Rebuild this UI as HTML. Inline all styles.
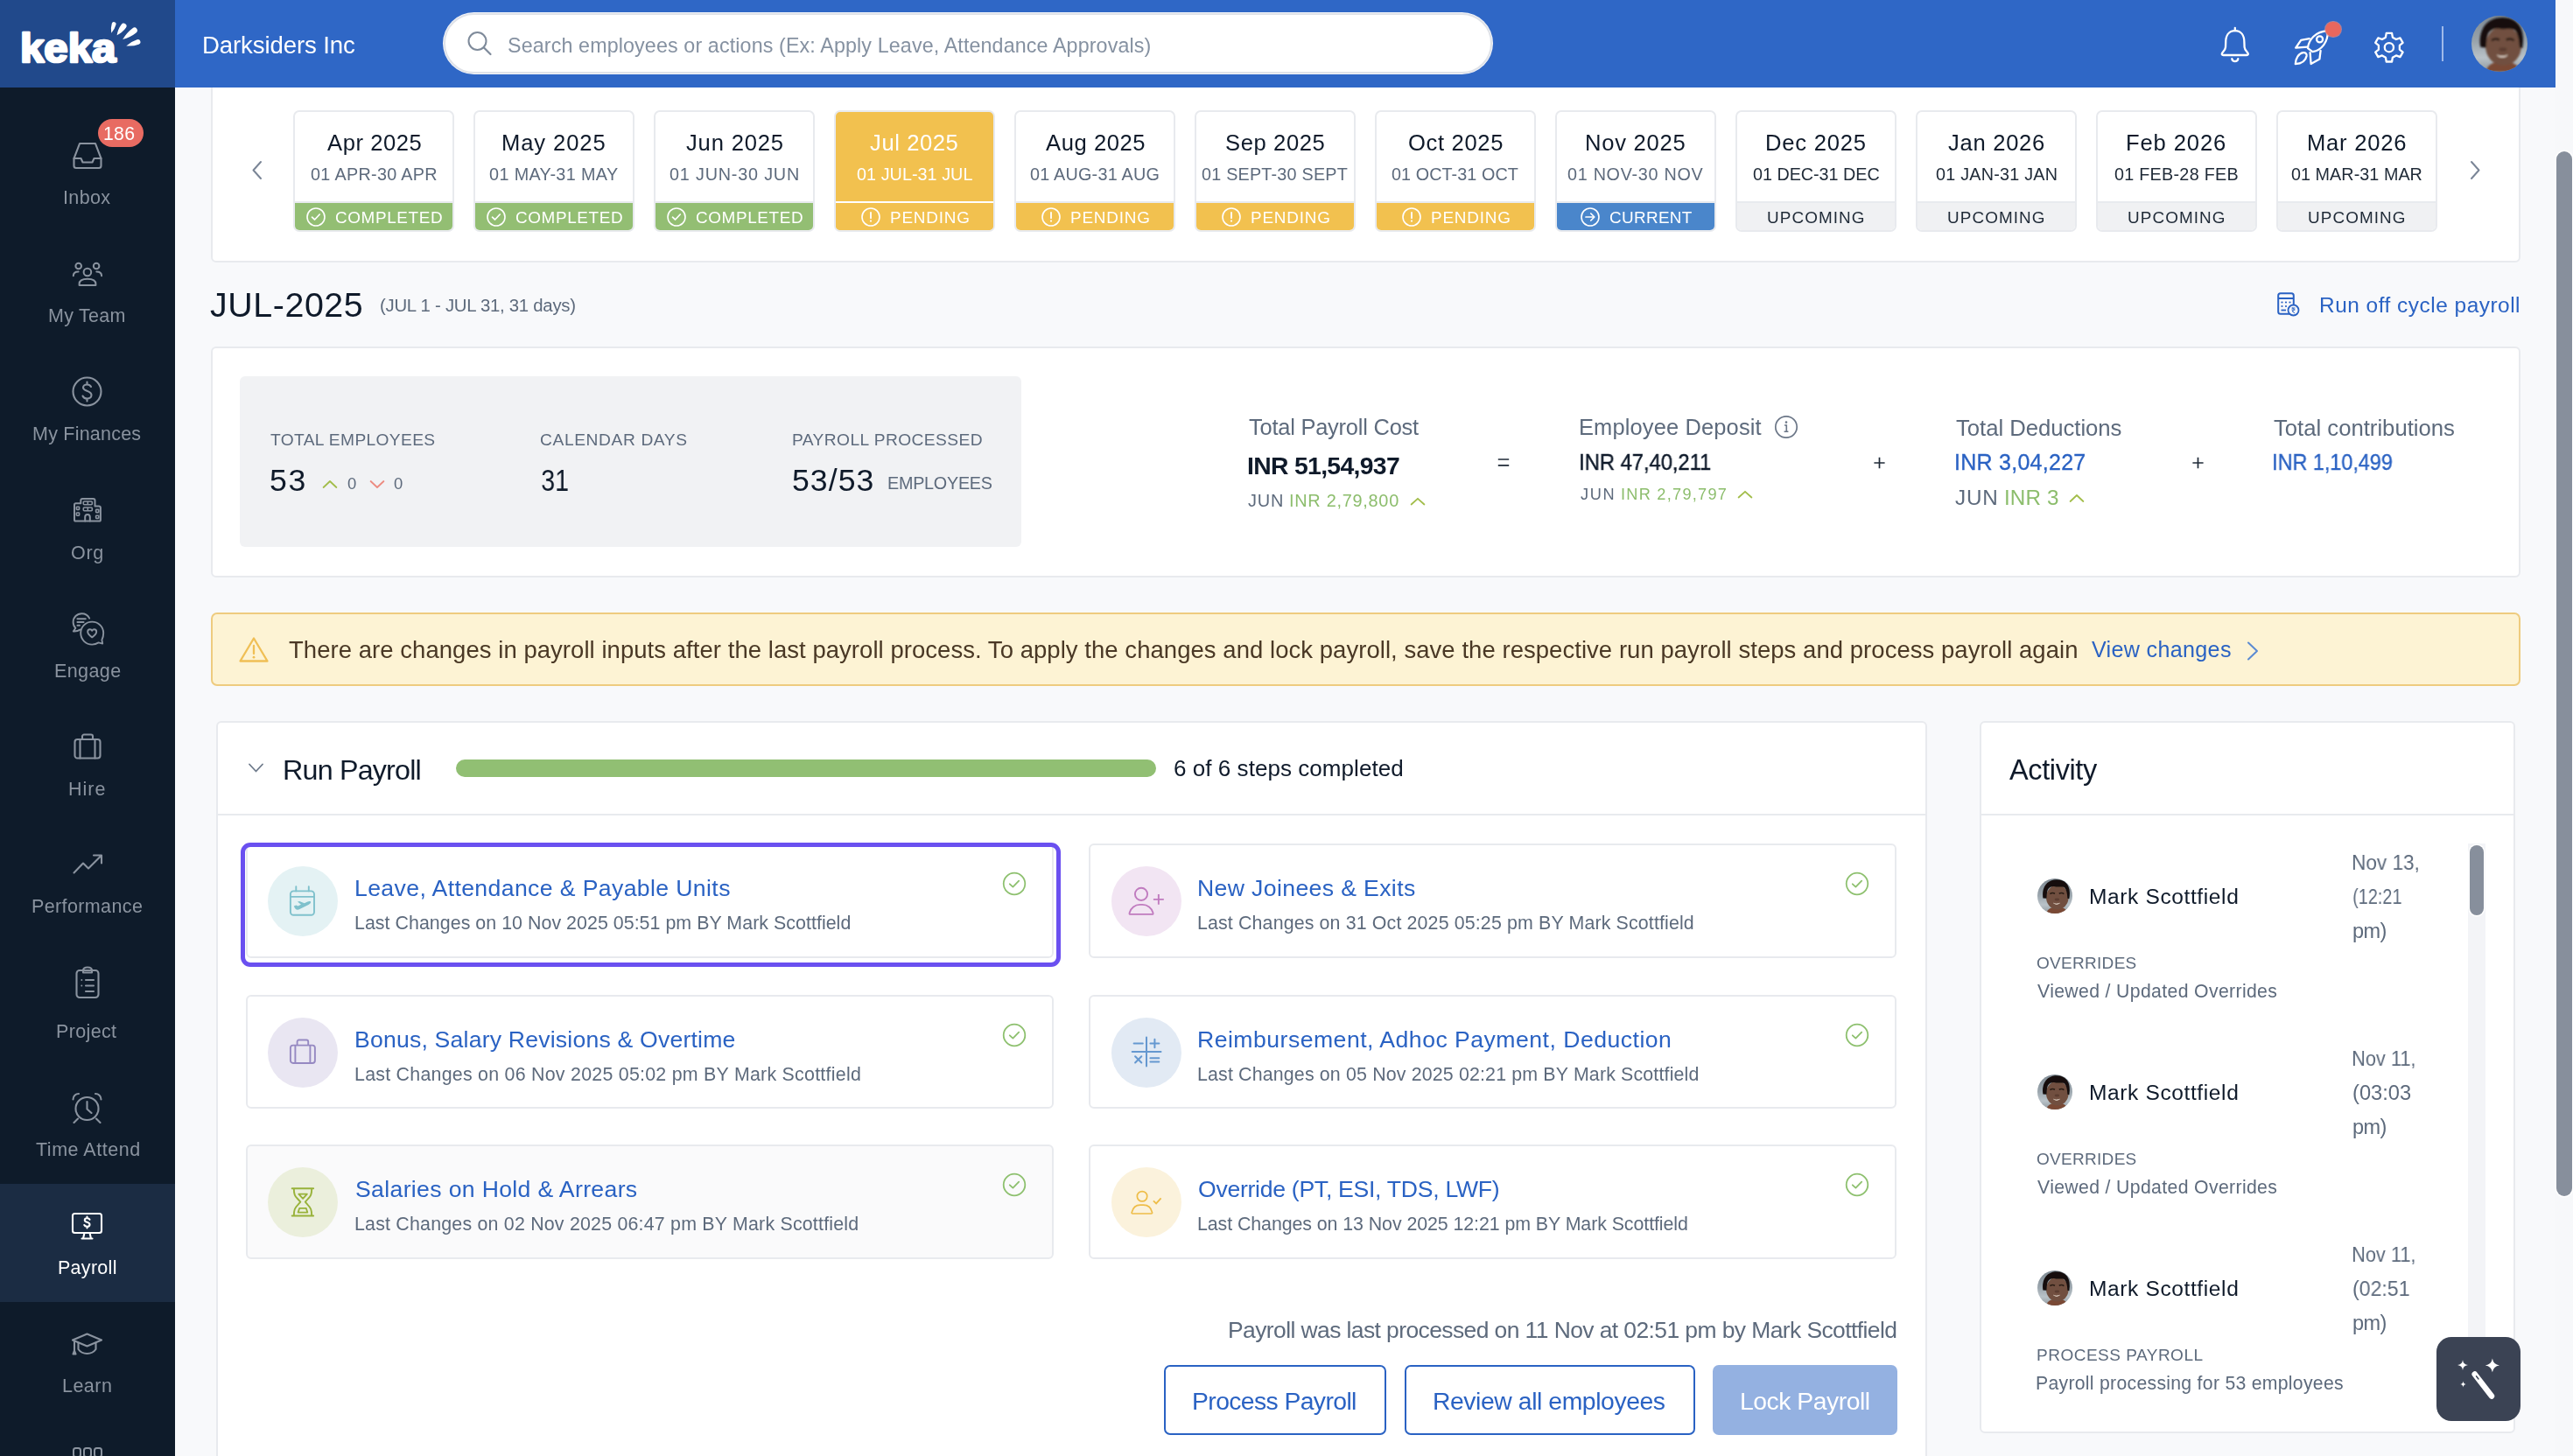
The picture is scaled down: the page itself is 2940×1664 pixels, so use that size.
<!DOCTYPE html>
<html><head><meta charset="utf-8"><style>
html,body{margin:0;padding:0;}
body{width:2940px;height:1664px;overflow:hidden;position:relative;background:#f8f9fb;font-family:"Liberation Sans",sans-serif;}
.t{position:absolute;white-space:pre;will-change:transform;font-family:"Liberation Sans",sans-serif;}
svg{position:absolute;overflow:visible}
@media (max-width: 2000px) { body{zoom:0.5} }
</style></head><body>
<div style="position:absolute;left:0px;top:0px;width:200px;height:1664px;background:#0e1b2a"></div>
<div style="position:absolute;left:2920px;top:0px;width:20px;height:1664px;background:#f7f8fa"></div>
<div style="position:absolute;left:2921px;top:173px;width:18px;height:1194px;background:#878f9c;border-radius:9px;box-shadow:0 0 0 1.5px #fff"></div>
<div style="position:absolute;left:240.5px;top:40px;width:2639.0px;height:260px;background:#fff;border:2px solid #e8eaee;border-radius:6px;box-sizing:border-box"></div>
<svg style="left:286px;top:182px" width="16" height="26" viewBox="0 0 16 26" fill="none"><path d="M12 3 L3.5 12.5 L12 22" stroke="#7a8596" stroke-width="2" stroke-linecap="round" stroke-linejoin="round"/></svg>
<svg style="left:2820px;top:182px" width="16" height="26" viewBox="0 0 16 26" fill="none"><path d="M4 3 L12.5 12.5 L4 22" stroke="#7a8596" stroke-width="2" stroke-linecap="round" stroke-linejoin="round"/></svg>
<div style="position:absolute;left:335px;top:126px;width:184px;height:139px;box-sizing:border-box;border:2px solid #e8eaee;border-radius:7px;background:#fff;overflow:hidden"><div style="position:absolute;left:0;right:0;top:102px;height:2px;background:#e8eaee"></div><div style="position:absolute;left:0;right:0;top:104px;bottom:0;background:#93be73"></div></div>
<div class="t" style="left:373.50px;top:151.30px;font-size:25.58px;line-height:25.58px;color:#0f1a2a;font-weight:400;letter-spacing:0.571px;">Apr 2025</div>
<div class="t" style="left:354.50px;top:190.00px;font-size:19.77px;line-height:19.77px;color:#5d6a7c;font-weight:400;letter-spacing:0.333px;">01 APR-30 APR</div>
<div class="t" style="left:383.00px;top:240.00px;font-size:18.9px;line-height:18.9px;color:#fff;font-weight:400;letter-spacing:0.625px;">COMPLETED</div>
<svg style="left:349.7px;top:236.8px" width="22" height="22" viewBox="0 0 22 22" fill="none"><circle cx="11" cy="11" r="10" stroke="#fff" stroke-width="1.6"/><path d="M6.5 11.2 L9.6 14 L15.2 8" stroke="#fff" stroke-width="1.7" stroke-linecap="round" stroke-linejoin="round"/></svg>
<div style="position:absolute;left:541px;top:126px;width:184px;height:139px;box-sizing:border-box;border:2px solid #e8eaee;border-radius:7px;background:#fff;overflow:hidden"><div style="position:absolute;left:0;right:0;top:102px;height:2px;background:#e8eaee"></div><div style="position:absolute;left:0;right:0;top:104px;bottom:0;background:#93be73"></div></div>
<div class="t" style="left:573.30px;top:151.30px;font-size:25.58px;line-height:25.58px;color:#0f1a2a;font-weight:400;letter-spacing:0.914px;">May 2025</div>
<div class="t" style="left:559.15px;top:190.00px;font-size:19.77px;line-height:19.77px;color:#5d6a7c;font-weight:400;letter-spacing:0.392px;">01 MAY-31 MAY</div>
<div class="t" style="left:589.00px;top:240.00px;font-size:18.9px;line-height:18.9px;color:#fff;font-weight:400;letter-spacing:0.625px;">COMPLETED</div>
<svg style="left:555.7px;top:236.8px" width="22" height="22" viewBox="0 0 22 22" fill="none"><circle cx="11" cy="11" r="10" stroke="#fff" stroke-width="1.6"/><path d="M6.5 11.2 L9.6 14 L15.2 8" stroke="#fff" stroke-width="1.7" stroke-linecap="round" stroke-linejoin="round"/></svg>
<div style="position:absolute;left:747px;top:126px;width:184px;height:139px;box-sizing:border-box;border:2px solid #e8eaee;border-radius:7px;background:#fff;overflow:hidden"><div style="position:absolute;left:0;right:0;top:102px;height:2px;background:#e8eaee"></div><div style="position:absolute;left:0;right:0;top:104px;bottom:0;background:#93be73"></div></div>
<div class="t" style="left:783.60px;top:151.30px;font-size:25.58px;line-height:25.58px;color:#0f1a2a;font-weight:400;letter-spacing:0.829px;">Jun 2025</div>
<div class="t" style="left:765.10px;top:190.00px;font-size:19.77px;line-height:19.77px;color:#5d6a7c;font-weight:400;letter-spacing:0.817px;">01 JUN-30 JUN</div>
<div class="t" style="left:795.00px;top:240.00px;font-size:18.9px;line-height:18.9px;color:#fff;font-weight:400;letter-spacing:0.625px;">COMPLETED</div>
<svg style="left:761.7px;top:236.8px" width="22" height="22" viewBox="0 0 22 22" fill="none"><circle cx="11" cy="11" r="10" stroke="#fff" stroke-width="1.6"/><path d="M6.5 11.2 L9.6 14 L15.2 8" stroke="#fff" stroke-width="1.7" stroke-linecap="round" stroke-linejoin="round"/></svg>
<div style="position:absolute;left:953px;top:126px;width:184px;height:139px;box-sizing:border-box;border:2px solid #e8eaee;border-radius:7px;background:#f2c14f;overflow:hidden"><div style="position:absolute;left:0;right:0;top:102px;height:2px;background:#fff"></div><div style="position:absolute;left:0;right:0;top:104px;bottom:0;background:#f2c14f"></div></div>
<div class="t" style="left:994.45px;top:151.30px;font-size:25.58px;line-height:25.58px;color:#fff;font-weight:400;letter-spacing:0.586px;">Jul 2025</div>
<div class="t" style="left:978.70px;top:190.00px;font-size:19.77px;line-height:19.77px;color:#fff;font-weight:400;letter-spacing:0.050px;">01 JUL-31 JUL</div>
<div class="t" style="left:1017.40px;top:240.00px;font-size:18.9px;line-height:18.9px;color:#fff;font-weight:400;letter-spacing:0.817px;">PENDING</div>
<svg style="left:984.1px;top:236.8px" width="22" height="22" viewBox="0 0 22 22" fill="none"><circle cx="11" cy="11" r="10" stroke="#fff" stroke-width="1.6"/><path d="M11 5.8 V12.3" stroke="#fff" stroke-width="1.8" stroke-linecap="round"/><circle cx="11" cy="15.6" r="1.1" fill="#fff"/></svg>
<div style="position:absolute;left:1159px;top:126px;width:184px;height:139px;box-sizing:border-box;border:2px solid #e8eaee;border-radius:7px;background:#fff;overflow:hidden"><div style="position:absolute;left:0;right:0;top:102px;height:2px;background:#e8eaee"></div><div style="position:absolute;left:0;right:0;top:104px;bottom:0;background:#f2c14f"></div></div>
<div class="t" style="left:1194.50px;top:151.30px;font-size:25.58px;line-height:25.58px;color:#0f1a2a;font-weight:400;letter-spacing:0.571px;">Aug 2025</div>
<div class="t" style="left:1177.10px;top:190.00px;font-size:19.77px;line-height:19.77px;color:#5d6a7c;font-weight:400;letter-spacing:0.233px;">01 AUG-31 AUG</div>
<div class="t" style="left:1223.40px;top:240.00px;font-size:18.9px;line-height:18.9px;color:#fff;font-weight:400;letter-spacing:0.817px;">PENDING</div>
<svg style="left:1190.1000000000001px;top:236.8px" width="22" height="22" viewBox="0 0 22 22" fill="none"><circle cx="11" cy="11" r="10" stroke="#fff" stroke-width="1.6"/><path d="M11 5.8 V12.3" stroke="#fff" stroke-width="1.8" stroke-linecap="round"/><circle cx="11" cy="15.6" r="1.1" fill="#fff"/></svg>
<div style="position:absolute;left:1365px;top:126px;width:184px;height:139px;box-sizing:border-box;border:2px solid #e8eaee;border-radius:7px;background:#fff;overflow:hidden"><div style="position:absolute;left:0;right:0;top:102px;height:2px;background:#e8eaee"></div><div style="position:absolute;left:0;right:0;top:104px;bottom:0;background:#f2c14f"></div></div>
<div class="t" style="left:1399.85px;top:151.30px;font-size:25.58px;line-height:25.58px;color:#0f1a2a;font-weight:400;letter-spacing:0.614px;">Sep 2025</div>
<div class="t" style="left:1373.45px;top:190.00px;font-size:19.77px;line-height:19.77px;color:#5d6a7c;font-weight:400;letter-spacing:0.221px;">01 SEPT-30 SEPT</div>
<div class="t" style="left:1429.40px;top:240.00px;font-size:18.9px;line-height:18.9px;color:#fff;font-weight:400;letter-spacing:0.817px;">PENDING</div>
<svg style="left:1396.1000000000001px;top:236.8px" width="22" height="22" viewBox="0 0 22 22" fill="none"><circle cx="11" cy="11" r="10" stroke="#fff" stroke-width="1.6"/><path d="M11 5.8 V12.3" stroke="#fff" stroke-width="1.8" stroke-linecap="round"/><circle cx="11" cy="15.6" r="1.1" fill="#fff"/></svg>
<div style="position:absolute;left:1571px;top:126px;width:184px;height:139px;box-sizing:border-box;border:2px solid #e8eaee;border-radius:7px;background:#fff;overflow:hidden"><div style="position:absolute;left:0;right:0;top:102px;height:2px;background:#e8eaee"></div><div style="position:absolute;left:0;right:0;top:104px;bottom:0;background:#f2c14f"></div></div>
<div class="t" style="left:1608.70px;top:151.30px;font-size:25.58px;line-height:25.58px;color:#0f1a2a;font-weight:400;letter-spacing:0.657px;">Oct 2025</div>
<div class="t" style="left:1590.00px;top:190.00px;font-size:19.77px;line-height:19.77px;color:#5d6a7c;font-weight:400;letter-spacing:0.083px;">01 OCT-31 OCT</div>
<div class="t" style="left:1635.40px;top:240.00px;font-size:18.9px;line-height:18.9px;color:#fff;font-weight:400;letter-spacing:0.817px;">PENDING</div>
<svg style="left:1602.1000000000001px;top:236.8px" width="22" height="22" viewBox="0 0 22 22" fill="none"><circle cx="11" cy="11" r="10" stroke="#fff" stroke-width="1.6"/><path d="M11 5.8 V12.3" stroke="#fff" stroke-width="1.8" stroke-linecap="round"/><circle cx="11" cy="15.6" r="1.1" fill="#fff"/></svg>
<div style="position:absolute;left:1777px;top:126px;width:184px;height:139px;box-sizing:border-box;border:2px solid #e8eaee;border-radius:7px;background:#fff;overflow:hidden"><div style="position:absolute;left:0;right:0;top:102px;height:2px;background:#e8eaee"></div><div style="position:absolute;left:0;right:0;top:104px;bottom:0;background:#4a86cb"></div></div>
<div class="t" style="left:1810.90px;top:151.30px;font-size:25.58px;line-height:25.58px;color:#0f1a2a;font-weight:400;letter-spacing:0.743px;">Nov 2025</div>
<div class="t" style="left:1791.20px;top:190.00px;font-size:19.77px;line-height:19.77px;color:#5d6a7c;font-weight:400;letter-spacing:0.717px;">01 NOV-30 NOV</div>
<div class="t" style="left:1839.00px;top:240.00px;font-size:18.9px;line-height:18.9px;color:#fff;font-weight:400;letter-spacing:0.333px;">CURRENT</div>
<svg style="left:1806.2px;top:236.8px" width="22" height="22" viewBox="0 0 22 22" fill="none"><circle cx="11" cy="11" r="10" stroke="#fff" stroke-width="1.6"/><path d="M6 11 H15.5 M11.8 7 L15.8 11 L11.8 15" stroke="#fff" stroke-width="1.7" stroke-linecap="round" stroke-linejoin="round"/></svg>
<div style="position:absolute;left:1983px;top:126px;width:184px;height:139px;box-sizing:border-box;border:2px solid #e8eaee;border-radius:7px;background:#fff;overflow:hidden"><div style="position:absolute;left:0;right:0;top:102px;height:2px;background:#e8eaee"></div><div style="position:absolute;left:0;right:0;top:104px;bottom:0;background:#f0f1f3"></div></div>
<div class="t" style="left:2016.70px;top:151.30px;font-size:25.58px;line-height:25.58px;color:#0f1a2a;font-weight:400;letter-spacing:0.800px;">Dec 2025</div>
<div class="t" style="left:2002.65px;top:190.00px;font-size:19.77px;line-height:19.77px;color:#1f2a37;font-weight:400;letter-spacing:-0.025px;">01 DEC-31 DEC</div>
<div class="t" style="left:2019.00px;top:240.00px;font-size:18.9px;line-height:18.9px;color:#1f2a37;font-weight:400;letter-spacing:1.086px;">UPCOMING</div>
<div style="position:absolute;left:2189px;top:126px;width:184px;height:139px;box-sizing:border-box;border:2px solid #e8eaee;border-radius:7px;background:#fff;overflow:hidden"><div style="position:absolute;left:0;right:0;top:102px;height:2px;background:#e8eaee"></div><div style="position:absolute;left:0;right:0;top:104px;bottom:0;background:#f0f1f3"></div></div>
<div class="t" style="left:2226.00px;top:151.30px;font-size:25.58px;line-height:25.58px;color:#0f1a2a;font-weight:400;letter-spacing:0.714px;">Jan 2026</div>
<div class="t" style="left:2211.65px;top:190.00px;font-size:19.77px;line-height:19.77px;color:#1f2a37;font-weight:400;letter-spacing:0.225px;">01 JAN-31 JAN</div>
<div class="t" style="left:2225.00px;top:240.00px;font-size:18.9px;line-height:18.9px;color:#1f2a37;font-weight:400;letter-spacing:1.086px;">UPCOMING</div>
<div style="position:absolute;left:2395px;top:126px;width:184px;height:139px;box-sizing:border-box;border:2px solid #e8eaee;border-radius:7px;background:#fff;overflow:hidden"><div style="position:absolute;left:0;right:0;top:102px;height:2px;background:#e8eaee"></div><div style="position:absolute;left:0;right:0;top:104px;bottom:0;background:#f0f1f3"></div></div>
<div class="t" style="left:2429.40px;top:151.30px;font-size:25.58px;line-height:25.58px;color:#0f1a2a;font-weight:400;letter-spacing:0.886px;">Feb 2026</div>
<div class="t" style="left:2415.90px;top:190.00px;font-size:19.77px;line-height:19.77px;color:#1f2a37;font-weight:400;letter-spacing:0.267px;">01 FEB-28 FEB</div>
<div class="t" style="left:2431.00px;top:240.00px;font-size:18.9px;line-height:18.9px;color:#1f2a37;font-weight:400;letter-spacing:1.086px;">UPCOMING</div>
<div style="position:absolute;left:2601px;top:126px;width:184px;height:139px;box-sizing:border-box;border:2px solid #e8eaee;border-radius:7px;background:#fff;overflow:hidden"><div style="position:absolute;left:0;right:0;top:102px;height:2px;background:#e8eaee"></div><div style="position:absolute;left:0;right:0;top:104px;bottom:0;background:#f0f1f3"></div></div>
<div class="t" style="left:2635.85px;top:151.30px;font-size:25.58px;line-height:25.58px;color:#0f1a2a;font-weight:400;letter-spacing:0.757px;">Mar 2026</div>
<div class="t" style="left:2618.25px;top:190.00px;font-size:19.77px;line-height:19.77px;color:#1f2a37;font-weight:400;letter-spacing:0.042px;">01 MAR-31 MAR</div>
<div class="t" style="left:2637.00px;top:240.00px;font-size:18.9px;line-height:18.9px;color:#1f2a37;font-weight:400;letter-spacing:1.086px;">UPCOMING</div>
<div class="t" style="left:239.80px;top:329.00px;font-size:39.39px;line-height:39.39px;color:#0f1a2a;font-weight:400;letter-spacing:0.571px;">JUL-2025</div>
<div class="t" style="left:434.00px;top:338.90px;font-size:20.35px;line-height:20.35px;color:#5d6a7c;font-weight:400;letter-spacing:-0.262px;">(JUL 1 - JUL 31, 31 days)</div>
<svg style="left:2602px;top:334px" width="26" height="28" viewBox="0 0 26 28" fill="none"><rect x="1.2" y="1.2" width="17.6" height="23.6" rx="2.5" stroke="#2a62c3" stroke-width="2"/><path d="M1.2 7 H18.8" stroke="#2a62c3" stroke-width="2"/><g fill="#2a62c3"><circle cx="5.5" cy="11.5" r="1.1"/><circle cx="10" cy="11.5" r="1.1"/><circle cx="14.5" cy="11.5" r="1.1"/><circle cx="5.5" cy="16" r="1.1"/><circle cx="10" cy="16" r="1.1"/></g><path d="M4.5 20.5 H10" stroke="#2a62c3" stroke-width="1.8"/><circle cx="18.5" cy="20.5" r="6" fill="#f8f9fb" stroke="#2a62c3" stroke-width="1.8"/><path d="M16.5 18 H20.5 M16.5 20 H20.5 M17 18 C20 18 20 21.5 17 21.5 L20 24" stroke="#2a62c3" stroke-width="1"/></svg>
<div class="t" style="left:2650.00px;top:336.70px;font-size:24.42px;line-height:24.42px;color:#2a62c3;font-weight:400;letter-spacing:0.510px;">Run off cycle payroll</div>
<div style="position:absolute;left:240.5px;top:396px;width:2639.0px;height:264px;background:#fff;border:2px solid #e8eaee;border-radius:6px;box-sizing:border-box"></div>
<div style="position:absolute;left:274px;top:430px;width:893px;height:195px;background:#f1f2f4;border-radius:6px"></div>
<div class="t" style="left:308.90px;top:492.90px;font-size:19.19px;line-height:19.19px;color:#5d6a7c;font-weight:400;letter-spacing:0.364px;">TOTAL EMPLOYEES</div>
<div class="t" style="left:308.00px;top:532.30px;font-size:35.61px;line-height:35.61px;color:#0f1a2a;font-weight:400;letter-spacing:1.700px;">53</div>
<svg style="left:368px;top:548px" width="18" height="11" viewBox="0 0 18 11" fill="none"><path d="M1.6 9 L9 2 L16.4 9" stroke="#a2bd4a" stroke-width="1.8" stroke-linecap="round" stroke-linejoin="round"/></svg>
<div class="t" style="left:397.00px;top:543.70px;font-size:18.46px;line-height:18.46px;color:#5d6a7c;font-weight:400;letter-spacing:0.000px;">0</div>
<svg style="left:421.5px;top:548px" width="18" height="11" viewBox="0 0 18 11" fill="none"><path d="M1.6 2 L9 9 L16.4 2" stroke="#ec8b80" stroke-width="1.8" stroke-linecap="round" stroke-linejoin="round"/></svg>
<div class="t" style="left:450.20px;top:543.70px;font-size:18.46px;line-height:18.46px;color:#5d6a7c;font-weight:400;letter-spacing:0.000px;">0</div>
<div class="t" style="left:617.00px;top:492.90px;font-size:19.19px;line-height:19.19px;color:#5d6a7c;font-weight:400;letter-spacing:0.617px;">CALENDAR DAYS</div>
<div class="t" style="left:617.80px;top:532.30px;font-size:35.61px;line-height:35.61px;color:#0f1a2a;font-weight:400;letter-spacing:0.000px;transform:scaleX(0.8027);transform-origin:1px 0;">31</div>
<div class="t" style="left:905.10px;top:492.90px;font-size:19.19px;line-height:19.19px;color:#5d6a7c;font-weight:400;letter-spacing:0.425px;">PAYROLL PROCESSED</div>
<div class="t" style="left:905.00px;top:532.30px;font-size:35.61px;line-height:35.61px;color:#0f1a2a;font-weight:400;letter-spacing:1.050px;">53/53</div>
<div class="t" style="left:1013.50px;top:543.40px;font-size:19.77px;line-height:19.77px;color:#5d6a7c;font-weight:400;letter-spacing:-0.250px;">EMPLOYEES</div>
<div class="t" style="left:1426.80px;top:476.10px;font-size:25.44px;line-height:25.44px;color:#5d6a7c;font-weight:400;letter-spacing:-0.224px;">Total Payroll Cost</div>
<div class="t" style="left:1425.00px;top:518.30px;font-size:28.34px;line-height:28.34px;color:#0f1a2a;font-weight:700;letter-spacing:-0.667px;">INR 51,54,937</div>
<div class="t" style="left:1426.20px;top:563.00px;font-size:19.91px;line-height:19.91px;color:#5d6a7c;font-weight:400;letter-spacing:0.800px;">JUN</div>
<div class="t" style="left:1472.70px;top:563.00px;font-size:19.91px;line-height:19.91px;color:#8cbd6c;font-weight:400;letter-spacing:0.718px;">INR 2,79,800</div>
<svg style="left:1610.5px;top:568px" width="18" height="10" viewBox="0 0 18 10" fill="none"><path d="M1.6 8.5 L9 1.8 L16.4 8.5" stroke="#a2bd4a" stroke-width="1.8" stroke-linecap="round" stroke-linejoin="round"/></svg>
<svg style="left:1711px;top:523px" width="14" height="11" viewBox="0 0 14 11" fill="none"><path d="M0.8 2 H13.2 M0.8 8.8 H13.2" stroke="#1f2a37" stroke-width="1.7"/></svg>
<div class="t" style="left:1804.20px;top:476.00px;font-size:25.44px;line-height:25.44px;color:#5d6a7c;font-weight:400;letter-spacing:0.147px;">Employee Deposit</div>
<svg style="left:2027px;top:474px" width="28" height="28" viewBox="0 0 28 28" fill="none"><circle cx="14" cy="14" r="12.2" stroke="#6b7687" stroke-width="1.7"/><circle cx="14" cy="8.6" r="1.3" fill="#6b7687"/><path d="M12 12 H14.3 V19 M11.6 19.2 H16.4" stroke="#6b7687" stroke-width="1.6"/></svg>
<div class="t" style="left:1803.60px;top:516.10px;font-size:25.44px;line-height:25.44px;color:#0f1a2a;font-weight:400;letter-spacing:0.000px;-webkit-text-stroke:0.45px #0f1a2a;transform:scaleX(0.9321);transform-origin:2px 0;">INR 47,40,211</div>
<div class="t" style="left:1806.00px;top:555.50px;font-size:18.17px;line-height:18.17px;color:#5d6a7c;font-weight:400;letter-spacing:1.650px;">JUN</div>
<div class="t" style="left:1852.40px;top:555.50px;font-size:18.17px;line-height:18.17px;color:#8cbd6c;font-weight:400;letter-spacing:1.264px;">INR 2,79,797</div>
<svg style="left:1984.5px;top:560px" width="18" height="10" viewBox="0 0 18 10" fill="none"><path d="M1.6 8.5 L9 1.8 L16.4 8.5" stroke="#a2bd4a" stroke-width="1.8" stroke-linecap="round" stroke-linejoin="round"/></svg>
<svg style="left:2140px;top:522px" width="15" height="14" viewBox="0 0 15 14" fill="none"><path d="M7.5 0.8 V13.2 M1.4 7 H13.6" stroke="#1f2a37" stroke-width="1.7"/></svg>
<div class="t" style="left:2234.90px;top:476.70px;font-size:25.73px;line-height:25.73px;color:#5d6a7c;font-weight:400;letter-spacing:-0.047px;">Total Deductions</div>
<div class="t" style="left:2233.00px;top:516.00px;font-size:25.0px;line-height:25.0px;color:#2a62c3;font-weight:400;letter-spacing:0.264px;-webkit-text-stroke:0.35px #2a62c3;">INR 3,04,227</div>
<div class="t" style="left:2234.00px;top:556.70px;font-size:24.27px;line-height:24.27px;color:#5d6a7c;font-weight:400;letter-spacing:0.800px;">JUN</div>
<div class="t" style="left:2289.80px;top:556.70px;font-size:24.27px;line-height:24.27px;color:#8cbd6c;font-weight:400;letter-spacing:0.125px;">INR 3</div>
<svg style="left:2363.5px;top:564px" width="18" height="11" viewBox="0 0 18 11" fill="none"><path d="M1.6 9 L9 2 L16.4 9" stroke="#a2bd4a" stroke-width="1.8" stroke-linecap="round" stroke-linejoin="round"/></svg>
<svg style="left:2503.5px;top:522px" width="15" height="14" viewBox="0 0 15 14" fill="none"><path d="M7.5 0.8 V13.2 M1.4 7 H13.6" stroke="#1f2a37" stroke-width="1.7"/></svg>
<div class="t" style="left:2598.40px;top:476.70px;font-size:25.73px;line-height:25.73px;color:#5d6a7c;font-weight:400;letter-spacing:-0.022px;">Total contributions</div>
<div class="t" style="left:2596.40px;top:516.00px;font-size:25.0px;line-height:25.0px;color:#2a62c3;font-weight:400;letter-spacing:0.000px;-webkit-text-stroke:0.35px #2a62c3;transform:scaleX(0.9345);transform-origin:2px 0;">INR 1,10,499</div>
<div style="position:absolute;left:240.5px;top:700px;width:2639.0px;height:84px;background:#fdf3d4;border:2px solid #eecb7e;border-radius:7px;box-sizing:border-box"></div>
<svg style="left:272px;top:727px" width="36" height="31" viewBox="0 0 36 31" fill="none"><path d="M18 2.5 L33.5 28.5 H2.5 Z" stroke="#f0bf55" stroke-width="2.3" stroke-linejoin="round"/><path d="M18 11 V20" stroke="#f0bf55" stroke-width="2.3" stroke-linecap="round"/><circle cx="18" cy="24.2" r="1.4" fill="#f0bf55"/></svg>
<div class="t" style="left:330.00px;top:728.80px;font-size:27.47px;line-height:27.47px;color:#4a3825;font-weight:400;letter-spacing:0.057px;">There are changes in payroll inputs after the last payroll process. To apply the changes and lock payroll, save the respective run payroll steps and process payroll again</div>
<div class="t" style="left:2390.40px;top:730.30px;font-size:25.15px;line-height:25.15px;color:#2a62c3;font-weight:400;letter-spacing:0.309px;">View changes</div>
<svg style="left:2566px;top:732px" width="16" height="24" viewBox="0 0 16 24" fill="none"><path d="M3 2.5 L13 12 L3 21.5" stroke="#5b8ad2" stroke-width="2" stroke-linecap="round" stroke-linejoin="round"/></svg>
<div style="position:absolute;left:246.5px;top:824px;width:1955.5px;height:896px;background:#fff;border:2px solid #e8eaee;border-radius:6px;box-sizing:border-box"></div>
<div style="position:absolute;left:248px;top:930px;width:1952px;height:2px;background:#e8eaee"></div>
<svg style="left:283px;top:871px" width="19" height="13" viewBox="0 0 19 13" fill="none"><path d="M2 2.5 L9.5 10.5 L17 2.5" stroke="#6e7a8b" stroke-width="1.8" stroke-linecap="round" stroke-linejoin="round"/></svg>
<div class="t" style="left:322.50px;top:863.70px;font-size:32.27px;line-height:32.27px;color:#0f1a2a;font-weight:400;letter-spacing:-0.810px;">Run Payroll</div>
<div style="position:absolute;left:521px;top:868px;width:800px;height:20px;background:#91bf73;border-radius:10px"></div>
<div class="t" style="left:1340.60px;top:865.30px;font-size:26.02px;line-height:26.02px;color:#0f1a2a;font-weight:400;letter-spacing:0.043px;">6 of 6 steps completed</div>
<div style="position:absolute;left:281px;top:964px;width:923px;height:131px;background:#fff;border:2px solid #e8eaee;border-radius:6px;box-sizing:border-box"></div>
<div style="position:absolute;left:306px;top:990px;width:80px;height:80px;background:#e4f2f4;border-radius:50%"></div>
<svg style="left:330px;top:1012px" width="31" height="36" viewBox="0 0 31 36" fill="none"><rect x="1.9" y="6.35" width="27.1" height="27.4" rx="3.5" stroke="#7fc1cc" stroke-width="1.9"/><path d="M1.9 12.9 H29 M8.3 1.2 V6.4 M22.8 1.2 V6.4" stroke="#7fc1cc" stroke-width="1.9" stroke-linecap="round"/><path d="M5.8 23.6 C6.6 25.6 7.6 27.6 9.6 27.7 L11.4 27.6 L22.5 22 C24.5 21 25.6 19.6 25 18.6 C24.4 17.8 22.8 18 21.5 18.6 L17.8 20.2 L12.2 18 L10 18.6 L14 21.8 L10.4 23.4 L8.4 22.5 Z" fill="#7fc1cc"/></svg>
<div class="t" style="left:405.00px;top:1001.70px;font-size:26.6px;line-height:26.6px;color:#2a62c3;font-weight:400;letter-spacing:0.391px;">Leave, Attendance &amp; Payable Units</div>
<div class="t" style="left:405.00px;top:1045.00px;font-size:21.37px;line-height:21.37px;color:#5d6a7c;font-weight:400;letter-spacing:0.046px;">Last Changes on 10 Nov 2025 05:51 pm BY Mark Scottfield</div>
<svg style="left:1145px;top:996px" width="28" height="28" viewBox="0 0 28 28" fill="none"><circle cx="14" cy="14" r="12.3" stroke="#8dc06e" stroke-width="1.8"/><path d="M8.8 14.3 L12.4 17.6 L19.2 10.6" stroke="#8dc06e" stroke-width="1.8" stroke-linecap="round" stroke-linejoin="round"/></svg>
<div style="position:absolute;left:1243.5px;top:964px;width:923.5px;height:131px;background:#fff;border:2px solid #e8eaee;border-radius:6px;box-sizing:border-box"></div>
<div style="position:absolute;left:1269.8px;top:990px;width:80.0px;height:80px;background:#f2e5f3;border-radius:50%"></div>
<svg style="left:1288.8px;top:1012px" width="42" height="35" viewBox="0 0 42 35" fill="none"><circle cx="15" cy="9.85" r="7.1" stroke="#c07bbf" stroke-width="1.9"/><path d="M2.6 32.9 C1.6 32.9 1.3 32.2 1.6 31.2 C3 25.5 8 21.9 13.5 21.9 H16.5 C22 21.9 27 25.5 28.5 31.2 C28.8 32.2 28.5 32.9 27.5 32.9 Z" stroke="#c07bbf" stroke-width="1.9" stroke-linejoin="round"/><path d="M34.85 10 V21.8 M28.9 15.9 H40.8" stroke="#c07bbf" stroke-width="1.9"/></svg>
<div class="t" style="left:1368.40px;top:1001.70px;font-size:26.6px;line-height:26.6px;color:#2a62c3;font-weight:400;letter-spacing:0.378px;">New Joinees &amp; Exits</div>
<div class="t" style="left:1368.40px;top:1045.00px;font-size:21.37px;line-height:21.37px;color:#5d6a7c;font-weight:400;letter-spacing:0.143px;">Last Changes on 31 Oct 2025 05:25 pm BY Mark Scottfield</div>
<svg style="left:2108px;top:996px" width="28" height="28" viewBox="0 0 28 28" fill="none"><circle cx="14" cy="14" r="12.3" stroke="#8dc06e" stroke-width="1.8"/><path d="M8.8 14.3 L12.4 17.6 L19.2 10.6" stroke="#8dc06e" stroke-width="1.8" stroke-linecap="round" stroke-linejoin="round"/></svg>
<div style="position:absolute;left:281px;top:1137px;width:923px;height:130px;background:#fff;border:2px solid #e8eaee;border-radius:6px;box-sizing:border-box"></div>
<div style="position:absolute;left:306px;top:1163px;width:80px;height:80px;background:#e9e6f2;border-radius:50%"></div>
<svg style="left:330px;top:1187px" width="32" height="30" viewBox="0 0 32 30" fill="none"><rect x="1.9" y="7.6" width="28" height="20.4" rx="3" stroke="#9689c2" stroke-width="1.9"/><path d="M9.6 7.6 V3.5 C9.6 2.3 10.4 1.5 11.6 1.5 H20.2 C21.4 1.5 22.2 2.3 22.2 3.5 V7.6 M7.4 7.6 V28 M24.4 7.6 V28" stroke="#9689c2" stroke-width="1.9"/></svg>
<div class="t" style="left:405.00px;top:1174.70px;font-size:26.6px;line-height:26.6px;color:#2a62c3;font-weight:400;letter-spacing:0.203px;">Bonus, Salary Revisions &amp; Overtime</div>
<div class="t" style="left:405.00px;top:1218.00px;font-size:21.37px;line-height:21.37px;color:#5d6a7c;font-weight:400;letter-spacing:0.259px;">Last Changes on 06 Nov 2025 05:02 pm BY Mark Scottfield</div>
<svg style="left:1145px;top:1169px" width="28" height="28" viewBox="0 0 28 28" fill="none"><circle cx="14" cy="14" r="12.3" stroke="#8dc06e" stroke-width="1.8"/><path d="M8.8 14.3 L12.4 17.6 L19.2 10.6" stroke="#8dc06e" stroke-width="1.8" stroke-linecap="round" stroke-linejoin="round"/></svg>
<div style="position:absolute;left:1243.5px;top:1137px;width:923.5px;height:130px;background:#fff;border:2px solid #e8eaee;border-radius:6px;box-sizing:border-box"></div>
<div style="position:absolute;left:1269.8px;top:1163px;width:80.0px;height:80px;background:#e2eaf4;border-radius:50%"></div>
<svg style="left:1291.8px;top:1184px" width="36" height="36" viewBox="0 0 36 36" fill="none"><path d="M18 1.6 V34.4 M1.7 18 H34.5" stroke="#6598d0" stroke-width="2" stroke-linecap="round"/><path d="M3.6 8.5 H13.8 M22.4 8.5 H32.4 M27.4 3.7 V13.3 M22.4 25.3 H32.3 M22.4 29.4 H32.3 M5.1 23.3 L12.3 30.5 M12.3 23.3 L5.1 30.5" stroke="#6598d0" stroke-width="2" stroke-linecap="round"/></svg>
<div class="t" style="left:1368.40px;top:1174.70px;font-size:26.6px;line-height:26.6px;color:#2a62c3;font-weight:400;letter-spacing:0.489px;">Reimbursement, Adhoc Payment, Deduction</div>
<div class="t" style="left:1368.40px;top:1218.00px;font-size:21.37px;line-height:21.37px;color:#5d6a7c;font-weight:400;letter-spacing:0.159px;">Last Changes on 05 Nov 2025 02:21 pm BY Mark Scottfield</div>
<svg style="left:2108px;top:1169px" width="28" height="28" viewBox="0 0 28 28" fill="none"><circle cx="14" cy="14" r="12.3" stroke="#8dc06e" stroke-width="1.8"/><path d="M8.8 14.3 L12.4 17.6 L19.2 10.6" stroke="#8dc06e" stroke-width="1.8" stroke-linecap="round" stroke-linejoin="round"/></svg>
<div style="position:absolute;left:281px;top:1308px;width:923px;height:131px;background:#fafafb;border:2px solid #e8eaee;border-radius:6px;box-sizing:border-box"></div>
<div style="position:absolute;left:306px;top:1334px;width:80px;height:80px;background:#ebefdc;border-radius:50%"></div>
<svg style="left:332px;top:1356px" width="28" height="36" viewBox="0 0 28 36" fill="none"><path d="M1.7 2.3 H26.1 M1.7 33.5 H26.1" stroke="#98b23a" stroke-width="2" stroke-linecap="round"/><path d="M3.8 2.3 C3.8 9 5 11 8 14 L11.3 17.7 L8 21.4 C5 24.5 3.8 26.5 3.8 33.5 M24.2 2.3 C24.2 9 23 11 20 14 L16.8 17.7 L20 21.4 C23 24.5 24.2 26.5 24.2 33.5" stroke="#98b23a" stroke-width="1.9" stroke-linejoin="round"/><path d="M9.3 8.6 H18.9 L14.1 13.9 Z M8.6 29.6 L10.2 24.8 H17.8 L19.3 29.6 Z" stroke="#98b23a" stroke-width="1.8" stroke-linejoin="round"/></svg>
<div class="t" style="left:406.00px;top:1345.70px;font-size:26.6px;line-height:26.6px;color:#2a62c3;font-weight:400;letter-spacing:0.352px;">Salaries on Hold &amp; Arrears</div>
<div class="t" style="left:405.00px;top:1389.00px;font-size:21.37px;line-height:21.37px;color:#5d6a7c;font-weight:400;letter-spacing:0.211px;">Last Changes on 02 Nov 2025 06:47 pm BY Mark Scottfield</div>
<svg style="left:1145px;top:1340px" width="28" height="28" viewBox="0 0 28 28" fill="none"><circle cx="14" cy="14" r="12.3" stroke="#8dc06e" stroke-width="1.8"/><path d="M8.8 14.3 L12.4 17.6 L19.2 10.6" stroke="#8dc06e" stroke-width="1.8" stroke-linecap="round" stroke-linejoin="round"/></svg>
<div style="position:absolute;left:1243.5px;top:1308px;width:923.5px;height:131px;background:#fff;border:2px solid #e8eaee;border-radius:6px;box-sizing:border-box"></div>
<div style="position:absolute;left:1269.8px;top:1334px;width:80.0px;height:80px;background:#fbf2dc;border-radius:50%"></div>
<svg style="left:1291.8px;top:1359px" width="36" height="30" viewBox="0 0 36 30" fill="none"><circle cx="13.05" cy="8.25" r="5.7" stroke="#eebd48" stroke-width="1.7"/><path d="M2.2 28 C1.4 28 1 27.4 1.2 26.6 C2.5 21 6.5 18.1 11 18.1 H14.6 C19.1 18.1 23.2 21 24.5 26.6 C24.7 27.4 24.3 28 23.5 28 Z" stroke="#eebd48" stroke-width="1.7" stroke-linejoin="round"/><path d="M25.9 13.4 L29.1 16.4 L34.6 10.4" stroke="#eebd48" stroke-width="1.8"/></svg>
<div class="t" style="left:1369.40px;top:1345.70px;font-size:26.6px;line-height:26.6px;color:#2a62c3;font-weight:400;letter-spacing:-0.281px;">Override (PT, ESI, TDS, LWF)</div>
<div class="t" style="left:1368.40px;top:1389.00px;font-size:21.37px;line-height:21.37px;color:#5d6a7c;font-weight:400;letter-spacing:-0.072px;">Last Changes on 13 Nov 2025 12:21 pm BY Mark Scottfield</div>
<svg style="left:2108px;top:1340px" width="28" height="28" viewBox="0 0 28 28" fill="none"><circle cx="14" cy="14" r="12.3" stroke="#8dc06e" stroke-width="1.8"/><path d="M8.8 14.3 L12.4 17.6 L19.2 10.6" stroke="#8dc06e" stroke-width="1.8" stroke-linecap="round" stroke-linejoin="round"/></svg>
<div style="position:absolute;left:275px;top:963px;width:937px;height:142px;border:5.5px solid #6a50f0;border-radius:11px;box-sizing:border-box"></div>
<div class="t" style="left:1403.40px;top:1507.00px;font-size:26.45px;line-height:26.45px;color:#5d6a7c;font-weight:400;letter-spacing:-0.582px;">Payroll was last processed on 11 Nov at 02:51 pm by Mark Scottfield</div>
<div style="position:absolute;left:1330px;top:1560px;width:254px;height:80px;border:2px solid #2a62c3;border-radius:7px;box-sizing:border-box;background:#fff"></div>
<div class="t" style="left:1361.80px;top:1586.60px;font-size:28.34px;line-height:28.34px;color:#2a62c3;font-weight:400;letter-spacing:-0.600px;">Process Payroll</div>
<div style="position:absolute;left:1605px;top:1560px;width:332px;height:80px;border:2px solid #2a62c3;border-radius:7px;box-sizing:border-box;background:#fff"></div>
<div class="t" style="left:1637.00px;top:1586.60px;font-size:28.34px;line-height:28.34px;color:#2a62c3;font-weight:400;letter-spacing:-0.421px;">Review all employees</div>
<div style="position:absolute;left:1957px;top:1560px;width:211px;height:80px;background:#94b1e1;border-radius:7px"></div>
<div class="t" style="left:1987.50px;top:1586.60px;font-size:28.34px;line-height:28.34px;color:#fff;font-weight:400;letter-spacing:-0.473px;">Lock Payroll</div>
<div style="position:absolute;left:2262px;top:824px;width:612px;height:814px;background:#fff;border:2px solid #e8eaee;border-radius:6px;box-sizing:border-box"></div>
<div style="position:absolute;left:2264px;top:930px;width:608px;height:2px;background:#e8eaee"></div>
<div class="t" style="left:2296.40px;top:864.00px;font-size:32.56px;line-height:32.56px;color:#0f1a2a;font-weight:400;letter-spacing:-0.400px;">Activity</div>
<div style="position:absolute;left:2820px;top:964px;width:20px;height:596px;background:#f3f4f7"></div>
<div style="position:absolute;left:2822px;top:966px;width:16px;height:80px;background:#878f9c;border-radius:8px;box-shadow:0 0 0 1.5px #fff"></div>
<svg style="left:2328px;top:1004.3px" width="40" height="40" viewBox="0 0 100 100"><defs><clipPath id="avc1"><circle cx="50" cy="50" r="50"/></clipPath><filter id="avf1" x="-10%" y="-10%" width="120%" height="120%"><feGaussianBlur stdDeviation="1.6"/></filter><linearGradient id="avg1" x1="0" y1="0" x2="0" y2="1"><stop offset="0" stop-color="#7f8a93"/><stop offset="0.45" stop-color="#98a3ab"/><stop offset="0.75" stop-color="#b9c2c8"/><stop offset="1" stop-color="#8f989e"/></linearGradient></defs><g clip-path="url(#avc1)"><rect width="100" height="100" fill="url(#avg1)"/><g filter="url(#avf1)"><path d="M26 100 C28 86 40 82 56 82 C72 82 84 86 88 100 Z" fill="#7a4a35"/><ellipse cx="57" cy="54" rx="32" ry="35" fill="#71503f"/><path d="M16 56 C11 22 30 3 55 3 C82 3 97 22 91 58 L86 57 C85 42 83 31 77 25 C69 22 59 25 50 23 C41 22 34 25 30 31 C27 37 27 46 26 57 Z" fill="#141010"/><path d="M36 44 C40 41 46 41 50 43 M62 43 C66 41 72 41 76 44" stroke="#2a1c16" stroke-width="4" fill="none"/><path d="M45 69 C50 73 60 73 65 69 C63 76 47 76 45 69 Z" fill="#efe4da"/><ellipse cx="56" cy="60" rx="7" ry="3.5" fill="#5b3d31"/></g></g></svg>
<div class="t" style="left:2387.30px;top:1013.30px;font-size:24.56px;line-height:24.56px;color:#0f1a2a;font-weight:400;letter-spacing:0.607px;">Mark Scottfield</div>
<div class="t" style="left:2687.20px;top:974.80px;font-size:23.55px;line-height:23.55px;color:#5d6a7c;font-weight:400;letter-spacing:0.000px;transform:scaleX(0.9584);transform-origin:2px 0;">Nov 13,</div>
<div class="t" style="left:2688.20px;top:1014.30px;font-size:23.55px;line-height:23.55px;color:#5d6a7c;font-weight:400;letter-spacing:0.000px;transform:scaleX(0.8431);transform-origin:1px 0;">(12:21</div>
<div class="t" style="left:2688.20px;top:1053.00px;font-size:23.55px;line-height:23.55px;color:#5d6a7c;font-weight:400;letter-spacing:-0.600px;">pm)</div>
<div class="t" style="left:2327.00px;top:1091.20px;font-size:19.04px;line-height:19.04px;color:#5d6a7c;font-weight:400;letter-spacing:0.275px;">OVERRIDES</div>
<div class="t" style="left:2328.00px;top:1122.30px;font-size:21.22px;line-height:21.22px;color:#5d6a7c;font-weight:400;letter-spacing:0.356px;">Viewed / Updated Overrides</div>
<svg style="left:2328px;top:1228.3px" width="40" height="40" viewBox="0 0 100 100"><defs><clipPath id="avc2"><circle cx="50" cy="50" r="50"/></clipPath><filter id="avf2" x="-10%" y="-10%" width="120%" height="120%"><feGaussianBlur stdDeviation="1.6"/></filter><linearGradient id="avg2" x1="0" y1="0" x2="0" y2="1"><stop offset="0" stop-color="#7f8a93"/><stop offset="0.45" stop-color="#98a3ab"/><stop offset="0.75" stop-color="#b9c2c8"/><stop offset="1" stop-color="#8f989e"/></linearGradient></defs><g clip-path="url(#avc2)"><rect width="100" height="100" fill="url(#avg2)"/><g filter="url(#avf2)"><path d="M26 100 C28 86 40 82 56 82 C72 82 84 86 88 100 Z" fill="#7a4a35"/><ellipse cx="57" cy="54" rx="32" ry="35" fill="#71503f"/><path d="M16 56 C11 22 30 3 55 3 C82 3 97 22 91 58 L86 57 C85 42 83 31 77 25 C69 22 59 25 50 23 C41 22 34 25 30 31 C27 37 27 46 26 57 Z" fill="#141010"/><path d="M36 44 C40 41 46 41 50 43 M62 43 C66 41 72 41 76 44" stroke="#2a1c16" stroke-width="4" fill="none"/><path d="M45 69 C50 73 60 73 65 69 C63 76 47 76 45 69 Z" fill="#efe4da"/><ellipse cx="56" cy="60" rx="7" ry="3.5" fill="#5b3d31"/></g></g></svg>
<div class="t" style="left:2387.30px;top:1237.30px;font-size:24.56px;line-height:24.56px;color:#0f1a2a;font-weight:400;letter-spacing:0.607px;">Mark Scottfield</div>
<div class="t" style="left:2687.20px;top:1198.80px;font-size:23.55px;line-height:23.55px;color:#5d6a7c;font-weight:400;letter-spacing:0.000px;transform:scaleX(0.9240);transform-origin:2px 0;">Nov 11,</div>
<div class="t" style="left:2688.20px;top:1238.30px;font-size:23.55px;line-height:23.55px;color:#5d6a7c;font-weight:400;letter-spacing:0.000px;transform:scaleX(1.0062);transform-origin:1px 0;">(03:03</div>
<div class="t" style="left:2688.20px;top:1277.00px;font-size:23.55px;line-height:23.55px;color:#5d6a7c;font-weight:400;letter-spacing:-0.600px;">pm)</div>
<div class="t" style="left:2327.00px;top:1315.20px;font-size:19.04px;line-height:19.04px;color:#5d6a7c;font-weight:400;letter-spacing:0.275px;">OVERRIDES</div>
<div class="t" style="left:2328.00px;top:1346.30px;font-size:21.22px;line-height:21.22px;color:#5d6a7c;font-weight:400;letter-spacing:0.356px;">Viewed / Updated Overrides</div>
<svg style="left:2328px;top:1452.3px" width="40" height="40" viewBox="0 0 100 100"><defs><clipPath id="avc3"><circle cx="50" cy="50" r="50"/></clipPath><filter id="avf3" x="-10%" y="-10%" width="120%" height="120%"><feGaussianBlur stdDeviation="1.6"/></filter><linearGradient id="avg3" x1="0" y1="0" x2="0" y2="1"><stop offset="0" stop-color="#7f8a93"/><stop offset="0.45" stop-color="#98a3ab"/><stop offset="0.75" stop-color="#b9c2c8"/><stop offset="1" stop-color="#8f989e"/></linearGradient></defs><g clip-path="url(#avc3)"><rect width="100" height="100" fill="url(#avg3)"/><g filter="url(#avf3)"><path d="M26 100 C28 86 40 82 56 82 C72 82 84 86 88 100 Z" fill="#7a4a35"/><ellipse cx="57" cy="54" rx="32" ry="35" fill="#71503f"/><path d="M16 56 C11 22 30 3 55 3 C82 3 97 22 91 58 L86 57 C85 42 83 31 77 25 C69 22 59 25 50 23 C41 22 34 25 30 31 C27 37 27 46 26 57 Z" fill="#141010"/><path d="M36 44 C40 41 46 41 50 43 M62 43 C66 41 72 41 76 44" stroke="#2a1c16" stroke-width="4" fill="none"/><path d="M45 69 C50 73 60 73 65 69 C63 76 47 76 45 69 Z" fill="#efe4da"/><ellipse cx="56" cy="60" rx="7" ry="3.5" fill="#5b3d31"/></g></g></svg>
<div class="t" style="left:2387.30px;top:1461.30px;font-size:24.56px;line-height:24.56px;color:#0f1a2a;font-weight:400;letter-spacing:0.607px;">Mark Scottfield</div>
<div class="t" style="left:2687.20px;top:1422.80px;font-size:23.55px;line-height:23.55px;color:#5d6a7c;font-weight:400;letter-spacing:0.000px;transform:scaleX(0.9240);transform-origin:2px 0;">Nov 11,</div>
<div class="t" style="left:2688.20px;top:1462.30px;font-size:23.55px;line-height:23.55px;color:#5d6a7c;font-weight:400;letter-spacing:0.000px;transform:scaleX(0.9815);transform-origin:1px 0;">(02:51</div>
<div class="t" style="left:2688.20px;top:1501.00px;font-size:23.55px;line-height:23.55px;color:#5d6a7c;font-weight:400;letter-spacing:-0.600px;">pm)</div>
<div class="t" style="left:2327.00px;top:1539.20px;font-size:19.04px;line-height:19.04px;color:#5d6a7c;font-weight:400;letter-spacing:0.479px;">PROCESS PAYROLL</div>
<div class="t" style="left:2326.00px;top:1570.30px;font-size:21.22px;line-height:21.22px;color:#5d6a7c;font-weight:400;letter-spacing:0.282px;">Payroll processing for 53 employees</div>
<div style="position:absolute;left:2784px;top:1528px;width:96px;height:96px;background:#3b4354;border-radius:17px"></div>
<svg style="left:2800px;top:1540px" width="64" height="70" viewBox="0 0 64 70" fill="none"><path d="M27.7 30.5 L47 55.6" stroke="#fff" stroke-width="6.5" stroke-linecap="round"/><path d="M29.5 32.8 L32 36" stroke="#3b4354" stroke-width="1.4" stroke-linecap="round"/><path d="M14 14.2 Q14.6 19.4 20 20.1 Q14.6 20.8 14 26 Q13.4 20.8 8 20.1 Q13.4 19.4 14 14.2 Z" fill="#fff"/><path d="M14.5 38.4 Q14.9 41.5 18 41.9 Q14.9 42.3 14.5 45.4 Q14.1 42.3 11 41.9 Q14.1 41.5 14.5 38.4 Z" fill="#fff"/><path d="M47.9 12.5 Q49 19.5 56 20.4 Q49 21.3 47.9 28.3 Q46.8 21.3 39.8 20.4 Q46.8 19.5 47.9 12.5 Z" fill="#fff"/></svg>
<div style="position:absolute;left:0px;top:0px;width:200px;height:100px;background:#21498b"></div>
<div style="position:absolute;left:200px;top:0px;width:2720px;height:100px;background:#2f67c6"></div>
<div class="t" style="left:231.20px;top:37.50px;font-size:27.62px;line-height:27.62px;color:#fff;font-weight:400;letter-spacing:-0.123px;">Darksiders Inc</div>
<div style="position:absolute;left:507px;top:15px;width:1198px;height:69px;background:#fff;border:2px solid #dfe2e8;border-radius:36px;box-sizing:border-box;box-shadow:0 0 0 1px #f4f6fa"></div>
<svg style="left:533px;top:35px" width="30" height="30" viewBox="0 0 30 30" fill="none"><circle cx="12.5" cy="12" r="10" stroke="#7e8a9a" stroke-width="2"/><path d="M20 19.5 L27.5 27" stroke="#7e8a9a" stroke-width="2.2" stroke-linecap="round"/></svg>
<div class="t" style="left:580.00px;top:40.50px;font-size:23.26px;line-height:23.26px;color:#8591a1;font-weight:400;letter-spacing:0.136px;">Search employees or actions (Ex: Apply Leave, Attendance Approvals)</div>
<svg style="left:2518px;top:20px" width="60" height="60" viewBox="2518 20 60 60" fill="none"><path d="M2553.8 35.2 C2546.5 35.2 2543.2 41 2543.2 48.5 L2543 53.8 C2542.8 56.8 2540.6 58.8 2539.3 60.4 C2538.3 61.8 2538.9 63 2540.4 63 H2567.2 C2568.7 63 2569.3 61.8 2568.3 60.4 C2567 58.8 2564.8 56.8 2564.6 53.8 L2564.4 48.5 C2564.4 41 2561.1 35.2 2553.8 35.2 Z" stroke="#fff" stroke-width="2.3" stroke-linejoin="round"/><path d="M2553.8 32 V35.2" stroke="#fff" stroke-width="2.3" stroke-linecap="round"/><path d="M2550.3 67.2 C2551 71 2556.6 71 2557.3 67.2" stroke="#fff" stroke-width="2.3" stroke-linecap="round"/></svg>
<svg style="left:2615px;top:25px" width="60" height="55" viewBox="2615 25 60 55" fill="none"><g stroke="#fff" stroke-width="2.3" stroke-linejoin="round" stroke-linecap="round"><path d="M2637 55.2 C2637.8 45 2646 36.2 2659.6 35.2 C2660.6 48 2652.5 57.5 2642.4 59.2 Z"/><circle cx="2650.6" cy="44.9" r="3.5"/><path d="M2636.6 53.6 L2623.2 54.6 L2629.2 45.8 L2638.8 44.2"/><path d="M2639.6 60.2 L2640.6 73 L2650.4 67.6 L2651.6 57.8"/><path d="M2622.8 73.2 C2623 66.5 2626.5 61.2 2631.6 60.2 C2634.4 59.8 2636 61.6 2635.6 64 C2634.4 69.6 2629.4 72.8 2622.8 73.2 Z"/></g></svg>
<div style="position:absolute;left:2657px;top:24.8px;width:17.6px;height:17.6px;border-radius:50%;background:#e8675e;box-shadow:0 0 0 1px rgba(240,150,140,0.6)"></div>
<svg style="left:2705px;top:30px" width="50" height="50" viewBox="2705 30 50 50" fill="none"><path d="M2725.93 42.66 L2726.73 37.90 L2733.07 37.90 L2733.87 42.66 L2737.90 44.99 L2742.43 43.31 L2745.60 48.80 L2741.88 51.87 L2741.88 56.53 L2745.60 59.60 L2742.43 65.09 L2737.90 63.41 L2733.87 65.74 L2733.07 70.50 L2726.73 70.50 L2725.93 65.74 L2721.90 63.41 L2717.37 65.09 L2714.20 59.60 L2717.92 56.53 L2717.92 51.87 L2714.20 48.80 L2717.37 43.31 L2721.90 44.99 Z" stroke="#fff" stroke-width="2.3" stroke-linejoin="round"/><circle cx="2729.9" cy="54.2" r="5.1" stroke="#fff" stroke-width="2.3"/></svg>
<div style="position:absolute;left:2790px;top:30px;width:2px;height:40px;background:#9fbaea"></div>
<svg style="left:2824px;top:18px" width="64" height="64" viewBox="0 0 100 100"><defs><clipPath id="avc4"><circle cx="50" cy="50" r="50"/></clipPath><filter id="avf4" x="-10%" y="-10%" width="120%" height="120%"><feGaussianBlur stdDeviation="1.6"/></filter><linearGradient id="avg4" x1="0" y1="0" x2="0" y2="1"><stop offset="0" stop-color="#7f8a93"/><stop offset="0.45" stop-color="#98a3ab"/><stop offset="0.75" stop-color="#b9c2c8"/><stop offset="1" stop-color="#8f989e"/></linearGradient></defs><g clip-path="url(#avc4)"><rect width="100" height="100" fill="url(#avg4)"/><g filter="url(#avf4)"><path d="M26 100 C28 86 40 82 56 82 C72 82 84 86 88 100 Z" fill="#7a4a35"/><ellipse cx="57" cy="54" rx="32" ry="35" fill="#71503f"/><path d="M16 56 C11 22 30 3 55 3 C82 3 97 22 91 58 L86 57 C85 42 83 31 77 25 C69 22 59 25 50 23 C41 22 34 25 30 31 C27 37 27 46 26 57 Z" fill="#141010"/><path d="M36 44 C40 41 46 41 50 43 M62 43 C66 41 72 41 76 44" stroke="#2a1c16" stroke-width="4" fill="none"/><path d="M45 69 C50 73 60 73 65 69 C63 76 47 76 45 69 Z" fill="#efe4da"/><ellipse cx="56" cy="60" rx="7" ry="3.5" fill="#5b3d31"/></g></g></svg>
<svg style="left:0px;top:0px" width="200" height="100" viewBox="0 0 200 100"><text x="23" y="71" font-family="Liberation Sans" font-weight="700" font-size="46" textLength="109.5" lengthAdjust="spacingAndGlyphs" fill="#fff" stroke="#fff" stroke-width="2.6" stroke-linejoin="round">keka</text><path d="M127.20 37.80 Q131.09 33.35 132.45 28.17 A2.4 2.4 0 0 0 127.83 26.85 Q126.25 31.96 127.20 37.80 Z" fill="#fff"/><path d="M133.60 40.30 Q140.15 37.08 143.87 31.78 A3.2 3.2 0 0 0 138.72 27.97 Q134.75 33.09 133.60 40.30 Z" fill="#fff"/><path d="M140.20 45.00 Q148.99 42.66 155.58 37.43 A3.3 3.3 0 0 0 151.57 32.18 Q144.79 37.15 140.20 45.00 Z" fill="#fff"/><path d="M144.30 52.40 Q151.90 53.05 158.48 50.68 A2.9 2.9 0 0 0 156.62 45.18 Q149.95 47.28 144.30 52.40 Z" fill="#fff"/></svg>
<div style="position:absolute;left:0px;top:1353px;width:200px;height:135px;background:#1b2c43"></div>
<div class="t" style="left:72.30px;top:216.00px;font-size:21.51px;line-height:21.51px;color:#8a939f;font-weight:400;letter-spacing:0.350px;">Inbox</div>
<div class="t" style="left:55.25px;top:351.40px;font-size:21.51px;line-height:21.51px;color:#8a939f;font-weight:400;letter-spacing:0.250px;">My Team</div>
<div class="t" style="left:37.40px;top:486.00px;font-size:21.51px;line-height:21.51px;color:#8a939f;font-weight:400;letter-spacing:0.220px;">My Finances</div>
<div class="t" style="left:81.30px;top:621.50px;font-size:21.51px;line-height:21.51px;color:#8a939f;font-weight:400;letter-spacing:0.700px;">Org</div>
<div class="t" style="left:61.50px;top:756.50px;font-size:21.51px;line-height:21.51px;color:#8a939f;font-weight:400;letter-spacing:0.400px;">Engage</div>
<div class="t" style="left:78.00px;top:891.50px;font-size:21.51px;line-height:21.51px;color:#8a939f;font-weight:400;letter-spacing:1.000px;">Hire</div>
<div class="t" style="left:36.10px;top:1026.30px;font-size:21.51px;line-height:21.51px;color:#8a939f;font-weight:400;letter-spacing:0.380px;">Performance</div>
<div class="t" style="left:64.45px;top:1169.10px;font-size:21.51px;line-height:21.51px;color:#8a939f;font-weight:400;letter-spacing:0.350px;">Project</div>
<div class="t" style="left:40.90px;top:1304.00px;font-size:21.51px;line-height:21.51px;color:#8a939f;font-weight:400;letter-spacing:0.520px;">Time Attend</div>
<div class="t" style="left:65.65px;top:1438.80px;font-size:21.51px;line-height:21.51px;color:#fff;font-weight:400;letter-spacing:0.283px;">Payroll</div>
<div class="t" style="left:71.05px;top:1574.00px;font-size:21.51px;line-height:21.51px;color:#8a939f;font-weight:400;letter-spacing:0.475px;">Learn</div>
<svg style="left:82px;top:162px" width="36" height="32" viewBox="0 0 36 32" fill="none"><path d="M9 2 H27 L33.5 19 V27.5 C33.5 29 32.5 30 31 30 H5 C3.5 30 2.5 29 2.5 27.5 V19 Z" stroke="#8a939f" stroke-width="2.1" stroke-linecap="round" stroke-linejoin="round"/><path d="M2.5 19 H10.5 L12.5 23.5 H23.5 L25.5 19 H33.5" stroke="#8a939f" stroke-width="2.1" stroke-linecap="round" stroke-linejoin="round"/></svg>
<div style="position:absolute;left:112px;top:136px;width:52px;height:32px;background:#e86b62;border-radius:16px"></div>
<div class="t" style="left:118.40px;top:142.00px;font-size:21.22px;line-height:21.22px;color:#fff;font-weight:400;letter-spacing:0.300px;">186</div>
<svg style="left:78px;top:295px" width="44" height="36" viewBox="78 295 44 36" fill="none"><g stroke="#8a939f" stroke-width="2" stroke-linejoin="round" stroke-linecap="round"><circle cx="89.7" cy="304" r="3.3"/><circle cx="110.1" cy="304" r="3.3"/><circle cx="99.9" cy="311" r="4.3"/><path d="M90.6 326 V324.6 C90.6 320.6 94.6 318.8 100 318.8 C105.4 318.8 109.4 320.6 109.4 324.6 V326 Z"/><path d="M83.8 315.2 C83.8 312.2 86 310.4 89.6 310.4 M116.1 315.2 C116.1 312.2 113.9 310.4 110.3 310.4"/></g></svg>
<svg style="left:82px;top:430px" width="36" height="36" viewBox="0 0 36 36" fill="none"><circle cx="17.5" cy="17.5" r="16" stroke="#8a939f" stroke-width="2.1" stroke-linecap="round" stroke-linejoin="round"/><path d="M22 12 C21 10 19.5 9.5 17.5 9.5 C14.5 9.5 13 11 13 13 C13 17.5 22.5 16 22.5 21.5 C22.5 23.8 20.5 25.5 17.5 25.5 C15 25.5 13.3 24.5 12.5 22.5 M17.5 6.5 V9.5 M17.5 25.5 V28.5" stroke="#8a939f" stroke-width="2.1" stroke-linecap="round" stroke-linejoin="round"/></svg>
<svg style="left:80px;top:565px" width="40" height="36" viewBox="80 565 40 36" fill="none"><g stroke="#8a939f" stroke-width="2" stroke-linejoin="round" stroke-linecap="round"><path d="M86.5 595.6 C85.4 595.6 85 595 85 594 V577 C85 575.9 85.6 575.3 86.7 575.3 H92.3 V572 C92.3 570.6 93 570 94.3 570 H106.5 C107.8 570 108.5 570.6 108.5 572 V578.4 H113 C114.3 578.4 114.9 579 114.9 580.3 V594 C114.9 595 114.4 595.6 113.4 595.6 Z"/><path d="M97.2 595.6 V591 C97.2 589.2 98.4 588 100 588 C101.6 588 102.8 589.2 102.8 591 V595.6"/></g><g stroke="#8a939f" stroke-width="1.6"><rect x="95.3" y="573" width="10" height="3.8" rx="1"/><path d="M100.3 573 V576.8"/><rect x="95.3" y="580" width="10" height="3.8" rx="1"/><path d="M100.3 580 V583.8"/><rect x="87.4" y="579.2" width="3.2" height="3.2" rx="0.6"/><rect x="87.4" y="586" width="3.2" height="3.2" rx="0.6"/><rect x="109.6" y="582.4" width="3.2" height="3.2" rx="0.6"/><rect x="109.6" y="589.2" width="3.2" height="3.2" rx="0.6"/></g></svg>
<svg style="left:78px;top:697px" width="44" height="42" viewBox="78 697 44 42" fill="none"><g stroke="#8a939f" stroke-width="1.9" stroke-linejoin="round" stroke-linecap="round"><path d="M102.2 706.6 C100.6 703.4 97.3 701.2 93.4 701.2 C88 701.2 83.6 705.5 83.6 710.9 C83.6 713.6 84.6 716 86.4 717.8 L83.8 721.5 C88 721.8 90.4 720.4 91.6 719.6"/><path d="M88.4 707.3 H97.8 M88.4 711 H95.6 M88.4 714.7 H91"/><path d="M116.4 731.4 C117.6 729 118.2 726.4 118.2 723.6 C118.2 716.3 112.4 710.6 105.2 710.6 C98 710.6 92.2 716.3 92.2 723.6 C92.2 730.8 98 736.6 105.2 736.6 C108 736.6 110.4 735.8 112.6 734.4 L117.2 735.6 Z"/><path d="M105.2 728.4 C101.8 726 100.2 724.2 100.2 722 C100.2 720.4 101.4 719.2 102.8 719.2 C103.9 719.2 104.7 719.8 105.2 720.8 C105.7 719.8 106.5 719.2 107.6 719.2 C109 719.2 110.2 720.4 110.2 722 C110.2 724.2 108.6 726 105.2 728.4 Z"/></g></svg>
<svg style="left:84px;top:838px" width="32" height="30" viewBox="0 0 32 30" fill="none"><rect x="1.5" y="7" width="29" height="21.5" rx="3" stroke="#8a939f" stroke-width="2.1" stroke-linecap="round" stroke-linejoin="round"/><path d="M10 7 V3.5 C10 2.5 11 1.5 12 1.5 H20 C21 1.5 22 2.5 22 3.5 V7 M7.5 7 V28.5 M24.5 7 V28.5" stroke="#8a939f" stroke-width="2.1" stroke-linecap="round" stroke-linejoin="round"/></svg>
<svg style="left:82px;top:975px" width="38" height="25" viewBox="0 0 38 25" fill="none"><path d="M2.5 22.5 L13 11.5 L19 17.5 L34 2.5 M25 2.5 H34 V11.5" stroke="#8a939f" stroke-width="2.1" stroke-linecap="round" stroke-linejoin="round"/></svg>
<svg style="left:86px;top:1104px" width="28" height="38" viewBox="0 0 28 38" fill="none"><rect x="1.5" y="5" width="25" height="31" rx="3.5" stroke="#8a939f" stroke-width="2.1" stroke-linecap="round" stroke-linejoin="round"/><path d="M9 5 C9 2.5 11 1.5 14 1.5 C17 1.5 19 2.5 19 5 V7.5 H9 Z" stroke="#8a939f" stroke-width="2.1" stroke-linecap="round" stroke-linejoin="round"/><path d="M12 16 H21 M12 22.5 H21 M12 29 H21" stroke="#8a939f" stroke-width="2.1" stroke-linecap="round" stroke-linejoin="round"/><circle cx="7.3" cy="16" r="1" fill="#8a939f"/><circle cx="7.3" cy="22.5" r="1" fill="#8a939f"/></svg>
<svg style="left:81px;top:1248px" width="38" height="37" viewBox="0 0 38 37" fill="none"><circle cx="18.5" cy="19" r="13" stroke="#8a939f" stroke-width="2.1" stroke-linecap="round" stroke-linejoin="round"/><path d="M18.5 11 V19.5 L23.5 24" stroke="#8a939f" stroke-width="2.1" stroke-linecap="round" stroke-linejoin="round"/><path d="M2.5 8.5 C2.5 4.5 5.5 2 9 2 M34.5 8.5 C34.5 4.5 31.5 2 28 2 M8 30.5 L3.5 35 M29 30.5 L33.5 35" stroke="#8a939f" stroke-width="2.1" stroke-linecap="round" stroke-linejoin="round"/></svg>
<svg style="left:81px;top:1385px" width="38" height="33" viewBox="0 0 38 33" fill="none"><rect x="2" y="2" width="33" height="22" rx="2.5" stroke="#fff" stroke-width="2.1" stroke-linecap="round" stroke-linejoin="round"/><path d="M12.5 30.5 H24.5 M15.5 24 L14 30.5 M21.5 24 L23 30.5" stroke="#fff" stroke-width="2.1" stroke-linecap="round" stroke-linejoin="round"/><path d="M21.5 8.8 C21 7.8 20 7.3 18.5 7.3 C16.8 7.3 15.8 8.2 15.8 9.4 C15.8 12.3 21.5 11.3 21.5 14.4 C21.5 15.8 20.3 16.8 18.5 16.8 C17 16.8 15.8 16.2 15.3 15 M18.5 5.5 V7.3 M18.5 16.8 V18.5" stroke="#fff" stroke-width="2.1" stroke-linecap="round" stroke-linejoin="round"/></svg>
<svg style="left:81px;top:1522px" width="38" height="28" viewBox="0 0 38 28" fill="none"><path d="M18.5 2.5 L35 9.5 L18.5 16.5 L2 9.5 Z" stroke="#8a939f" stroke-width="2.1" stroke-linecap="round" stroke-linejoin="round"/><path d="M8.5 12.5 V20 C11 23.5 15 25 18.5 25 C22 25 26 23.5 28.5 20 V12.5" stroke="#8a939f" stroke-width="2.1" stroke-linecap="round" stroke-linejoin="round"/><path d="M4 10.5 V22 M2.5 25.5 L4 21.5 L5.5 25.5 Z" stroke="#8a939f" stroke-width="2.1" stroke-linecap="round" stroke-linejoin="round"/></svg>
<div style="position:absolute;left:83.4px;top:1653.8px;width:9.8px;height:12px;border:2.8px solid #8a939f;border-radius:3.5px;box-sizing:border-box"></div>
<div style="position:absolute;left:95.2px;top:1653.8px;width:9.8px;height:12px;border:2.8px solid #8a939f;border-radius:3.5px;box-sizing:border-box"></div>
<div style="position:absolute;left:107.0px;top:1653.8px;width:9.8px;height:12px;border:2.8px solid #8a939f;border-radius:3.5px;box-sizing:border-box"></div>
</body></html>
